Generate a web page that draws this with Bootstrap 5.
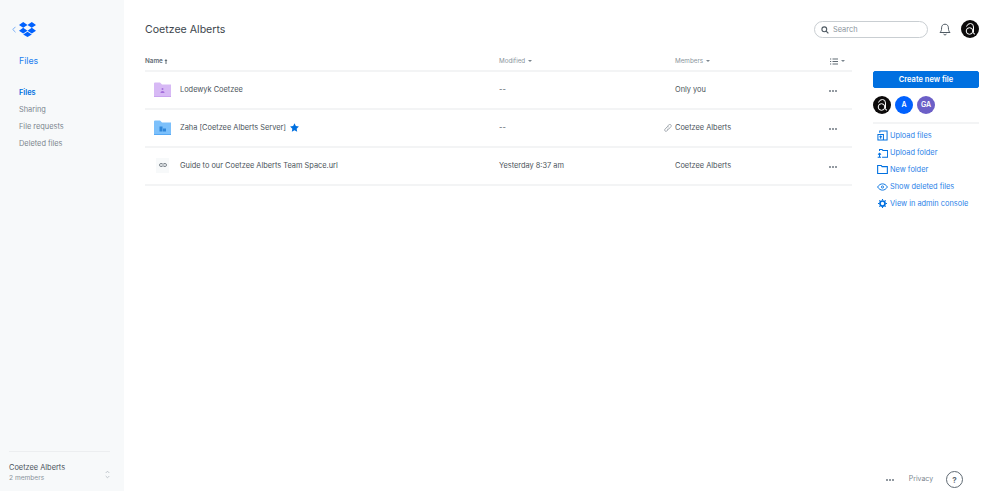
<!DOCTYPE html>
<html lang="en"><head><meta charset="utf-8"><title>Files</title>
<link href="https://cdn.jsdelivr.net/npm/bootstrap@5.3.0/dist/css/bootstrap.min.css" rel="stylesheet">
<style>
html,body{height:100%}
body{font-family:Inter,"Liberation Sans",sans-serif;font-size:7.4px;color:#4a535a;background:#fff;overflow:hidden}
.shell{height:491px}
.side{width:124px;background:#f7f9fa;padding:0 14px 0 9px}
.logo-row{height:15px;margin-top:22px;gap:3px;padding-left:3px}
.side-title{color:#1e7ff0;font-size:8.8px;margin:17px 0 0 10px;line-height:14px;height:14px}
.side-nav{margin:16px 0 0 10px}
.side-nav a{display:block;height:17px;line-height:17px;color:#7b858e;text-decoration:none}
.side-nav a.on{color:#0070e0;font-weight:600}
.team{border-top:1px solid #eceef0;margin-top:auto;height:40px;padding-top:10px;line-height:11px}
.team .sub{color:#8a949c;font-size:6.6px}
.main{padding:0 20px 0 21px;min-width:0}
.topbar{height:46px;padding-top:14px}
.page-title{font-size:10.6px;font-weight:400;margin:1px 0 0;line-height:30px;color:#3d464d}
.search{width:114px;height:17px;border:1px solid #c9ced2;border-radius:9px;padding-left:6px;gap:4px;color:#8a949c;margin:1px 11px 0 0}
.bell{margin-right:10px}
.ava{border-radius:50%;display:flex;align-items:center;justify-content:center;color:#fff;font-weight:600;flex:none}
.ava-k{width:18px;height:18px;background:#0c0a0a}
.ava-a{width:18px;height:18px;background:#0061fe;font-size:7px}
.ava-g{width:18px;height:18px;background:#6c5fc7;font-size:7px}
.listing{width:707px}
.hd{height:26px;border-bottom:2px solid #f3f4f5;color:#8a949c;font-size:6.3px;padding-top:7px}
.hd .first{color:#5f6a73;font-weight:600}
.rw{height:38px;border-bottom:2px solid #f3f4f5;color:#4a535a}
.c1{width:354px;padding-left:9px}
.c2{width:176px}
.c3{width:143px;position:relative}
.c4{flex:1;text-align:right}
.ico{width:17px;margin:0 9px 2px 0;flex:none;display:flex;justify-content:center}
.linkbox{width:13px;height:15px;background:#f7f9fa;display:flex;align-items:center;justify-content:center}
.star{margin:0 0 2px 4px;flex:none}
.tri{display:inline-block;border:2px solid transparent;border-top:2.5px solid #7b858e;border-bottom:0;margin-left:3px;vertical-align:1px}
.chain{position:absolute;left:-11px;top:2px}
.dots{display:inline-flex;gap:1px;margin-right:15px}
.dots i{width:2px;height:2px;border-radius:50%;background:#6f7982}
.rail{width:106px;margin-left:21px}
.create{height:17px;line-height:15px;padding:0;font-size:7.500px;font-weight:600;background:#0070e0;border-color:#0070e0;border-radius:2px;width:100%;display:block}
.spacer{height:25px}
.folks{gap:4px;margin-top:8px;padding-bottom:8px;border-bottom:2px solid #f3f4f5}
.acts{margin-top:3px}
.acts a{height:17px;display:flex;align-items:center;color:#2b7fe8;text-decoration:none;padding-left:4px;white-space:nowrap}
.acts .gl{width:13px;display:flex;flex:none}
.gl .cog{margin-left:1px}
.foot{height:23px;color:#7b858e;flex:none}
.help{width:17px;height:17px;border:1.500px solid #5f6a73;border-radius:50%;color:#5f6a73;font-weight:700;font-size:8px;display:flex;align-items:center;justify-content:center;margin-left:13px;margin-right:16px}
.pv{margin-left:15px;font-size:6.900px}
</style></head><body>
<div class="d-flex shell">
 <aside class="side d-flex flex-column">
  <div class="d-flex align-items-center logo-row">
   <svg width="4" height="7" viewBox="0 0 4 7"><path d="M3.500.8.800 3.500l2.700 2.700" fill="none" stroke="#6aa5f5" stroke-width=".9"/></svg>
   <svg width="17" height="15" viewBox="0 0 17 14" preserveAspectRatio="none"><path fill="#0061fe" d="M4.200 0 0 2.700l4.200 2.700 4.300-2.700zM12.800 0 8.500 2.700l4.300 2.700L17 2.700zM0 8.100l4.200 2.700 4.300-2.700-4.300-2.700zM12.800 5.400 8.500 8.100l4.300 2.700L17 8.100zM4.200 11.700l4.300 2.300 4.300-2.300-4.300-2.700z"/></svg>
  </div>
  <div class="side-title">Files</div>
  <nav class="side-nav">
   <a class="on" href="#">Files</a><a href="#">Sharing</a><a href="#">File requests</a><a href="#">Deleted files</a>
  </nav>
  <div class="team d-flex justify-content-between">
   <div><div>Coetzee Alberts</div><div class="sub">2 members</div></div>
   <svg class="mt-2" width="5" height="9" viewBox="0 0 5 9"><path d="M.7 3 2.500 1.200 4.300 3M.7 6l1.800 1.800L4.300 6" fill="none" stroke="#b4bbc1" stroke-width=".8"/></svg>
  </div>
 </aside>
 <main class="main flex-grow-1 d-flex flex-column">
  <header class="topbar d-flex align-items-start">
   <h1 class="page-title flex-grow-1">Coetzee Alberts</h1>
   <div class="d-flex align-items-center" style="height:30px">
    <div class="search d-flex align-items-center">
     <svg width="8" height="8" viewBox="0 0 8 8"><circle cx="3.300" cy="3.300" r="2.400" fill="none" stroke="#4f5a63" stroke-width="1.100"/><path d="m5.100 5.100 2.300 2.300" stroke="#4f5a63" stroke-width="1.200"/></svg>
     <span>Search</span>
    </div>
    <svg class="bell" width="12" height="13" viewBox="0 0 12 13"><path d="M6 1.200c-2.200 0-3.400 1.600-3.400 3.600 0 2.400-.5 3.600-1.600 4.700h10c-1.100-1.100-1.600-2.300-1.600-4.700 0-2-1.200-3.600-3.400-3.600zM4.600 10.800c.3.800.8 1.200 1.400 1.200s1.100-.4 1.400-1.200" fill="none" stroke="#4f5a63" stroke-width="1"/></svg>
    <div class="ava ava-k"><svg width="18" height="18" viewBox="0 0 18 18"><path d="M5.500 6.500Q6.500 3.500 9.500 3.500 12.500 3.500 12.500 7V12.500Q12.500 14.500 14 14" fill="none" stroke="#fff" stroke-width="1"/><circle cx="8.500" cy="11" r="3.300" fill="none" stroke="#fff" stroke-width="1"/></svg></div>
   </div>
  </header>
  <div class="d-flex flex-grow-1">
   <section class="listing">
    <div class="hd d-flex align-items-center">
     <div class="first" style="width:354px">Name <svg width="4" height="5" viewBox="0 0 4 5"><path d="M2 0 .4 2h3zM1.500 2h1v3h-1z" fill="#5f6a73"/></svg></div>
     <div class="c2">Modified<span class="tri"></span></div>
     <div class="c3">Members<span class="tri"></span></div>
     <div class="c4"><svg width="8" height="7" viewBox="0 0 8 7"><path d="M0 .5h1.200v1H0zM0 3h1.200v1H0zM0 5.500h1.200v1H0zM2.500 .5H8v1H2.500zM2.500 3H8v1H2.500zM2.500 5.500H8v1H2.500z" fill="#5f6a73"/></svg><span class="tri" style="margin-left:3px;margin-right:7px"></span></div>
    </div>
    <div class="rw d-flex align-items-center">
     <div class="c1 d-flex align-items-center">
      <span class="ico"><svg width="17" height="15" viewBox="0 0 17 15"><path d="M0 1.500Q0 .5 1 .5h5l2 2h9v12H0z" fill="#d7b9f5"/><path d="M0 14h17v1H0z" fill="#c9a3ef"/><circle cx="8.500" cy="7" r="1" fill="#a46fdc"/><path d="M6.500 11c0-1.300.8-2 2-2s2 .7 2 2z" fill="#a46fdc"/></svg></span>
      <span>Lodewyk Coetzee</span>
     </div>
     <div class="c2">--</div><div class="c3">Only you</div>
     <div class="c4"><span class="dots"><i></i><i></i><i></i></span></div>
    </div>
    <div class="rw d-flex align-items-center">
     <div class="c1 d-flex align-items-center">
      <span class="ico"><svg width="17" height="15" viewBox="0 0 17 15"><path d="M0 1.500Q0 .5 1 .5h5l2 2h9v12H0z" fill="#7cc0fb"/><path d="M0 14h17v1H0z" fill="#56a9f5"/><path d="M5.500 6.500h3v5h-3zM9 8.500h3v3H9z" fill="#2f86d9"/></svg></span>
      <span>Zaha [Coetzee Alberts Server]</span>
      <svg class="star" width="9" height="9" viewBox="0 0 10 10"><path d="m5 .3 1.500 3.100 3.400.5-2.500 2.400.6 3.400L5 8.100 2 9.700l.6-3.400L.1 3.900l3.400-.5z" fill="#0070e0"/></svg>
     </div>
     <div class="c2">--</div>
     <div class="c3"><svg class="chain" width="8" height="8" viewBox="0 0 8 8"><path d="M3.300 2.300 4.900.9c.7-.6 1.500-.6 2 0s.5 1.300 0 1.800L4.800 5c-.6.500-1.200.5-1.700 0M4.700 3c-.5-.5-1.100-.5-1.700 0L1.100 5.100c-.6.600-.6 1.300-.1 1.800s1.300.5 1.900-.1L4.200 5.600" fill="none" stroke="#7b858e" stroke-width=".7"/></svg>Coetzee Alberts</div>
     <div class="c4"><span class="dots"><i></i><i></i><i></i></span></div>
    </div>
    <div class="rw d-flex align-items-center">
     <div class="c1 d-flex align-items-center">
      <span class="ico"><span class="linkbox"><svg width="8" height="4" viewBox="0 0 8 4"><path d="M3.500.5H2a1.500 1.500 0 0 0 0 3h1.500M4.500.5H6a1.500 1.500 0 0 1 0 3H4.500M2.500 2h3" fill="none" stroke="#5f6a73" stroke-width=".8"/></svg></span></span>
      <span>Guide to our Coetzee Alberts Team Space.url</span>
     </div>
     <div class="c2">Yesterday 8:37 am</div><div class="c3">Coetzee Alberts</div>
     <div class="c4"><span class="dots"><i></i><i></i><i></i></span></div>
    </div>
   </section>
   <aside class="rail">
    <div class="spacer"></div>
    <button class="btn btn-primary create" type="button">Create new file</button>
    <div class="d-flex folks">
     <div class="ava ava-k"><svg width="18" height="18" viewBox="0 0 18 18"><path d="M5.500 6.500Q6.500 3.500 9.500 3.500 12.500 3.500 12.500 7V12.500Q12.500 14.500 14 14" fill="none" stroke="#fff" stroke-width="1"/><circle cx="8.500" cy="11" r="3.300" fill="none" stroke="#fff" stroke-width="1"/></svg></div>
     <div class="ava ava-a">A</div><div class="ava ava-g">GA</div></div>
    <div class="acts">
     <a href="#"><span class="gl"><svg width="11" height="11" viewBox="0 0 12 12"><path d="M3 3V1h8v10H6M1 5h6v6H1zM4 9.500V6.800M2.800 7.800 4 6.600l1.200 1.200" fill="none" stroke="#0070e0" stroke-width="1.100"/></svg></span>Upload files</a>
     <a href="#"><span class="gl"><svg width="11" height="10" viewBox="0 0 13 11"><path d="M3 3V1.500h3l1 1h5.500v8H6M3 10.500V6M1.300 7.500 3 5.800l1.700 1.700M.8 10.500h4" fill="none" stroke="#0070e0" stroke-width="1.200"/></svg></span>Upload folder</a>
     <a href="#"><span class="gl"><svg width="11" height="9" viewBox="0 0 12 10"><path d="M.6.600h4l1 1.200h5.800v7.600H.6z" fill="none" stroke="#0070e0" stroke-width="1.200"/></svg></span>New folder</a>
     <a href="#"><span class="gl"><svg width="11" height="8" viewBox="0 0 13 9"><path d="M.7 4.500C2.300 2 4.300.8 6.500.8s4.200 1.200 5.800 3.700C10.700 7 8.700 8.200 6.500 8.200S2.300 7 .7 4.500z" fill="none" stroke="#0070e0" stroke-width="1.100"/><circle cx="6.500" cy="4.500" r="1.300" fill="none" stroke="#0070e0"/></svg></span>Show deleted files</a>
     <a href="#"><span class="gl"><svg class="cog" width="9" height="9" viewBox="0 0 10 10"><circle cx="5" cy="5" r="2.800" fill="none" stroke="#0070e0" stroke-width="1.900"/><path d="M5 0v10M0 5h10M1.500 1.500l7 7M8.500 1.500l-7 7" stroke="#0070e0" stroke-width="1.200" stroke-dasharray="1.500 7 1.500"/></svg></span>View in admin console</a>
    </div>
   </aside>
  </div>
  <footer class="foot d-flex align-items-center justify-content-end">
   <span class="dots" style="margin:0"><i></i><i></i><i></i></span><span class="pv">Privacy</span><span class="help">?</span>
  </footer>
 </main>
</div>
<script src="https://cdn.jsdelivr.net/npm/bootstrap@5.3.0/dist/js/bootstrap.bundle.min.js"></script>
</body></html>
